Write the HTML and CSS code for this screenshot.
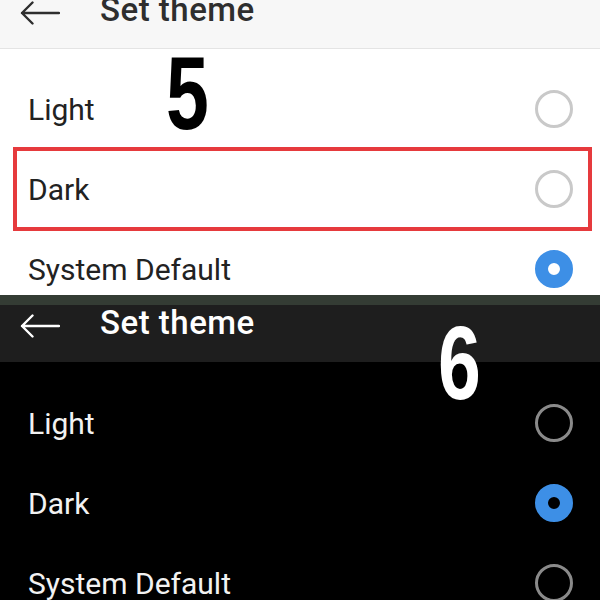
FILE: index.html
```html
<!DOCTYPE html>
<html lang="en">

<head>
    <meta charset="UTF-8">
    <meta name="viewport" content="width=device-width, initial-scale=1.0">
    <title>Set theme - steps 5 and 6</title>
    <link rel="stylesheet" href="styles.css">
</head>

<body>
    <!-- step 5 : light screen, "Dark" highlighted -->
    <div class="screen light">
        <header class="topbar">
            <svg class="back" width="40" height="24" viewBox="0 0 40 24">
                <path d="M2 12 H39 M12.5 1.5 L2 12 L12.5 22.5" fill="none" stroke="currentColor" stroke-width="2.4" stroke-linecap="round" stroke-linejoin="round" />
            </svg>
            <span class="title">Set theme</span>
        </header>
        <div class="options">
            <div class="option"><span>Light</span><span class="radio"></span></div>
            <div class="option marked"><span>Dark</span><span class="radio"></span></div>
            <div class="option"><span>System Default</span><span class="radio checked"></span></div>
        </div>
        <div class="step step-5">5</div>
    </div>

    <!-- step 6 : dark screen, "Dark" selected -->
    <div class="screen dark">
        <div class="statusbar"></div>
        <header class="topbar">
            <svg class="back" width="40" height="24" viewBox="0 0 40 24">
                <path d="M2 12 H39 M12.5 1.5 L2 12 L12.5 22.5" fill="none" stroke="currentColor" stroke-width="2.4" stroke-linecap="round" stroke-linejoin="round" />
            </svg>
            <span class="title">Set theme</span>
        </header>
        <div class="options">
            <div class="option"><span>Light</span><span class="radio"></span></div>
            <div class="option"><span>Dark</span><span class="radio checked"></span></div>
            <div class="option"><span>System Default</span><span class="radio"></span></div>
        </div>
        <div class="step step-6">6</div>
    </div>
</body>

</html>
```

FILE: styles.css
```css
body {
    font-family: Roboto, "Noto Sans", Arial, sans-serif;
    margin: 0;
    padding: 0;
    width: 600px;
    height: 600px;
    overflow: hidden;
}

.screen {
    position: relative;
    overflow: hidden;
}

.light {
    height: 295px;
    background-color: #ffffff;
    color: #222222;
}

.dark {
    height: 305px;
    background-color: #000000;
    color: #f2f2f2;
}

.statusbar {
    height: 10px;
    background-color: #343c34;
}

.topbar {
    display: flex;
    align-items: flex-start;
    box-sizing: border-box;
    height: 57px;
    padding: 2px 0 0 20px;
}

.light .topbar {
    margin-top: -8px;
    background-color: #f7f7f7;
    border-bottom: 1px solid #e4e4e4;
    color: #2e2e2e;
}

.dark .topbar {
    background-color: #1e1e1e;
    color: #ffffff;
}

.back {
    display: block;
    margin-top: 7px;
    flex-shrink: 0;
}

.title {
    margin-left: 40px;
    font-size: 33px;
    line-height: 32px;
    font-weight: 500;
    letter-spacing: 0.5px;
}

.options {
    padding: 20px 10px 0 15px;
}

.dark .options {
    padding-top: 21px;
}

.option {
    display: flex;
    align-items: center;
    justify-content: space-between;
    height: 80px;
    padding: 0 17px 0 13px;
    font-size: 30px;
}

.option.marked {
    outline: 4px solid #e63a3d;
    outline-offset: -2px;
}

.radio {
    box-sizing: border-box;
    width: 38px;
    height: 38px;
    border-radius: 50%;
    border: 3px solid #c9c9c9;
}

.dark .radio {
    border-color: #8a8a8a;
}

.radio.checked,
.dark .radio.checked {
    border: 13px solid #3d8fe6;
}

/* step numbers drawn over the screenshots */
.step {
    position: absolute;
    font-family: "Liberation Sans", Arial, sans-serif;
    font-weight: bold;
    font-size: 104px;
    line-height: 1;
    transform: scaleX(0.74);
    transform-origin: left top;
}

.step-5 {
    left: 166px;
    top: 41px;
    color: #000000;
}

.step-6 {
    left: 438px;
    top: 16px;
    color: #ffffff;
}
```
